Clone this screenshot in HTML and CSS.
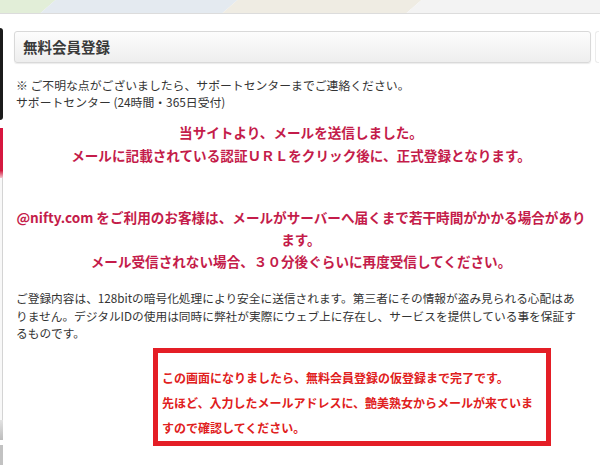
FILE: index.html
```html
<!DOCTYPE html>
<html lang="ja">
<head>
<meta charset="utf-8">
<title>無料会員登録</title>
<link rel="stylesheet" href="styles.css">
</head>
<body>
<div class="tabs">
  <div class="tab tab-green"></div>
  <div class="tab tab-blue"></div>
  <div class="tab tab-beige"></div>
  <div class="tab tab-grey"></div>
</div>
<div class="page">
  <div class="sidebar">
    <div class="sb-black"></div>
    <div class="sb-red"></div>
    <div class="sb-line"></div>
    <div class="sb-btn1"></div>
    <div class="sb-btn2"></div>
  </div>
  <div class="main">
    <div class="title-row">
      <h1 class="title">無料会員登録</h1>
      <div class="title-edge"></div>
    </div>
    <p class="info">※ ご不明な点がございましたら、サポートセンターまでご連絡ください。<br>サポートセンター (24時間・365日受付)</p>
    <p class="notice notice-1">当サイトより、メールを送信しました。<br>メールに記載されている認証ＵＲＬをクリック後に、正式登録となります。</p>
    <p class="notice notice-2">@nifty.com をご利用のお客様は、メールがサーバーへ届くまで若干時間がかかる場合があり<br>ます。<br>メール受信されない場合、３０分後ぐらいに再度受信してください。</p>
    <p class="secure">ご登録内容は、128bitの暗号化処理により安全に送信されます。第三者にその情報が盗み見られる心配はあ<br>りません。デジタルIDの使用は同時に弊社が実際にウェブ上に存在し、サービスを提供している事を保証す<br>るものです。</p>
    <div class="callout">
      <p>この画面になりましたら、無料会員登録の仮登録まで完了です。<br>先ほど、入力したメールアドレスに、艶美熟女からメールが来ていま<br>すので確認してください。</p>
    </div>
  </div>
</div>
</body>
</html>
```

FILE: styles.css
```css
html, body {
  margin: 0;
  padding: 0;
  background: #ffffff;
}
body {
  font-family: "Noto Sans CJK JP", "Noto Sans", sans-serif;
  color: #333333;
  width: 600px;
  height: 465px;
  overflow: hidden;
}
p { margin: 0; }

.tabs {
  display: flex;
  height: 13px;
  border-bottom: 1px solid #dcdcdc;
  overflow: hidden;
}
.tab {
  height: 100%;
  transform: skewX(-49deg);
  flex: none;
}
.tab-green { width: 60px; margin-left: -12px; background: #e2eed8; }
.tab-blue { width: 182px; background: #e4eaf0; }
.tab-beige { width: 184px; background: #efece3; }
.tab-grey { width: 220px; background: #f3f3f3; }

.page {
  display: flex;
}
.sidebar {
  width: 3px;
  flex: none;
  display: flex;
  flex-direction: column;
  padding-top: 14px;
}
.sb-black {
  height: 92px;
  background: #1b1b1b;
  border-radius: 0 4px 4px 0;
}
.sb-red {
  margin-top: 8px;
  height: 50px;
  background: linear-gradient(#d8143e, #d41a40 85%, #f2c8d0);
}
.sb-line {
  height: 242px;
  background: #f8f8f8;
  border-right: 1px solid #d4d4d4;
  box-sizing: border-box;
}
.sb-btn1 {
  height: 20px;
  background: linear-gradient(#e2e2e2, #bdbdbd);
}
.sb-btn2 {
  margin-top: 5px;
  height: 22px;
  background: #c2c2c2;
}

.main {
  flex: 1;
  padding: 17px 0 0 11px;
  min-width: 0;
}
.title-row {
  display: flex;
  align-items: flex-start;
}
.title {
  flex: none;
  width: 577px;
  height: 32px;
  margin: 0;
  padding: 0 0 0 8px;
  box-sizing: border-box;
  border: 1px solid #d9d9d9;
  border-radius: 3px;
  background: linear-gradient(#fdfdfd, #eeeeee);
  box-shadow: 0 1px 1px rgba(0, 0, 0, 0.08);
  font-size: 14.5px;
  line-height: 29px;
  font-weight: 700;
  color: #3a3a3a;
}
.title-edge {
  margin-left: 4px;
  width: 4px;
  height: 32px;
  border: 1px solid #ececec;
  border-right: none;
  border-radius: 3px 0 0 3px;
  box-sizing: border-box;
}

.info {
  margin: 13px 0 0 2px;
  font-size: 11.85px;
  line-height: 17px;
  color: #333333;
}
.notice {
  text-align: center;
  font-weight: 700;
  font-size: 13.6px;
  color: #c41c4a;
  white-space: nowrap;
  width: 574px;
}
.notice-1 {
  margin-top: 11px;
  line-height: 23px;
}
.notice-2 {
  margin-top: 39px;
  line-height: 22px;
}
.secure {
  margin: 17px 0 0 2px;
  font-size: 11.7px;
  line-height: 17.5px;
  color: #333333;
  white-space: nowrap;
}
.callout {
  margin: 6px 0 0 139px;
  width: 398px;
  height: 98px;
  box-sizing: border-box;
  border: 5px solid #e41e26;
  padding: 12px 0 0 4px;
}
.callout p {
  font-size: 12px;
  line-height: 25px;
  font-weight: 700;
  color: #e02020;
  white-space: nowrap;
}
```
